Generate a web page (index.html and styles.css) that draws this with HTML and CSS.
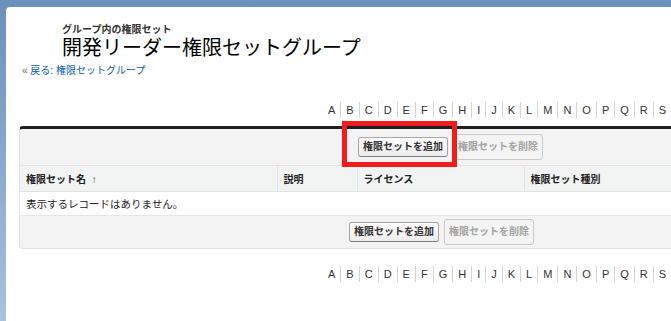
FILE: index.html
```html
<!DOCTYPE html>
<html lang="ja">
<head>
    <meta charset="UTF-8" />
    <title>開発リーダー権限セットグループ</title>
    <link rel="stylesheet" href="styles.css">
</head>
<body>
    <div class="page">
        <div class="page-title">
            <h2 class="page-type">グループ内の権限セット</h2>
            <h1 class="page-name">開発リーダー権限セットグループ</h1>
            <div class="breadcrumb">« <a href="#">戻る: 権限セットグループ</a></div>
        </div>

        <div class="rolodex">
            <a href="#">A</a><a href="#">B</a><a href="#">C</a><a href="#">D</a><a href="#">E</a><a href="#">F</a><a href="#">G</a><a href="#">H</a><a href="#">I</a><a href="#">J</a><a href="#">K</a><a href="#">L</a><a href="#">M</a><a href="#">N</a><a href="#">O</a><a href="#">P</a><a href="#">Q</a><a href="#">R</a><a href="#">S</a>
        </div>

        <div class="list-block">
            <div class="btn-row btn-row-top">
                <button class="btn">権限セットを追加</button>
                <button class="btn btn-disabled" disabled>権限セットを削除</button>
            </div>
            <table class="list">
                <thead>
                    <tr>
                        <th class="col-name">権限セット名 <span class="sort">↑</span></th>
                        <th class="col-desc">説明</th>
                        <th class="col-license">ライセンス</th>
                        <th class="col-type">権限セット種別</th>
                    </tr>
                </thead>
                <tbody>
                    <tr>
                        <td colspan="4">表示するレコードはありません。</td>
                    </tr>
                </tbody>
            </table>
            <div class="btn-row btn-row-bottom">
                <button class="btn">権限セットを追加</button>
                <button class="btn btn-disabled" disabled>権限セットを削除</button>
            </div>
        </div>

        <div class="rolodex rolodex-bottom">
            <a href="#">A</a><a href="#">B</a><a href="#">C</a><a href="#">D</a><a href="#">E</a><a href="#">F</a><a href="#">G</a><a href="#">H</a><a href="#">I</a><a href="#">J</a><a href="#">K</a><a href="#">L</a><a href="#">M</a><a href="#">N</a><a href="#">O</a><a href="#">P</a><a href="#">Q</a><a href="#">R</a><a href="#">S</a>
        </div>

        <!-- 追加ボタンの強調枠 -->
        <div class="highlight"></div>
    </div>
</body>
</html>
```

FILE: styles.css
```css
* {
    margin: 0;
    padding: 0;
    box-sizing: border-box;
}
body {
    height: 321px;
    overflow: hidden;
    background: linear-gradient(#6a90bc, #aac1de);
    font-family: "Liberation Sans", "Noto Sans CJK JP", sans-serif;
    color: #222;
}
.page {
    position: relative;
    margin: 7px 0 0 6px;
    width: 760px;
    height: 314px;
    background: white;
    border-top-left-radius: 4px;
}
.page-title {
    padding-top: 17px;
}
.page-type {
    margin-left: 56px;
    font-size: 10px;
    line-height: 12px;
    font-weight: bold;
    color: #333;
}
.page-name {
    margin-left: 56px;
    font-size: 20px;
    line-height: 24px;
    font-weight: normal;
    color: #000;
}
.breadcrumb {
    margin: 4px 0 0 16px;
    font-size: 10px;
    line-height: 14px;
    color: #666;
}
.breadcrumb a {
    color: #0b5ea8;
    text-decoration: none;
}

.rolodex {
    display: flex;
    margin: 24px 0 0 317px;
    font-size: 11px;
    line-height: 16px;
}
.rolodex a {
    padding: 0 5px;
    color: #333;
    text-decoration: none;
    border-left: 1px solid #d4d4d4;
}
.rolodex a:first-child {
    border-left: none;
}
.rolodex a:last-child {
    border-right: 1px solid #d4d4d4;
}
.rolodex-bottom {
    margin-top: 17px;
}

.list-block {
    margin: 8px 0 0 13px;
    width: 720px;
    border: 1px solid #e0e3e5;
    border-top: 3px solid #1f1f1f;
    border-radius: 4px;
    overflow: hidden;
    background: #f3f3f3;
}
.btn-row {
    display: flex;
    align-items: center;
    gap: 5px;
}
.btn-row-top {
    height: 36px;
    padding-left: 338px;
}
.btn-row-bottom {
    height: 32px;
    padding-left: 329px;
}
.btn {
    font-family: inherit;
    font-size: 10px;
    line-height: 12px;
    font-weight: bold;
    color: #333;
    padding: 3px 4px;
    background: linear-gradient(#fdfdfd, #ececec);
    border: 1px solid #a5a5a5;
    border-bottom-color: #7f7f7f;
    border-radius: 3px;
}
.btn-disabled {
    padding: 6px 4px;
    color: #a3a3a3;
    background: #f4f4f4;
    border-color: #c9c9c9;
}

.list {
    width: 100%;
    border-collapse: collapse;
    background: white;
    font-size: 10px;
}
.list th {
    height: 26px;
    padding: 0 6px;
    text-align: left;
    font-weight: bold;
    color: #222;
    background: #f2f3f3;
    border-top: 1px solid #e0e3e5;
    border-bottom: 1px solid #e0e3e5;
    border-left: 1px solid #e0e3e5;
}
.list th:first-child {
    border-left: none;
}
.col-name {
    width: 257px;
}
.col-desc {
    width: 80px;
}
.col-license {
    width: 167px;
}
.sort {
    margin-left: 3px;
    font-size: 10px;
    font-weight: normal;
    color: #444;
}
.list td {
    height: 24px;
    padding: 0 6px;
    font-size: 10.5px;
    color: #222;
    border-bottom: 1px solid #e6e6e6;
}

.highlight {
    position: absolute;
    left: 336px;
    top: 114px;
    width: 115px;
    height: 46px;
    border: 5px solid #f31c1c;
}
```
